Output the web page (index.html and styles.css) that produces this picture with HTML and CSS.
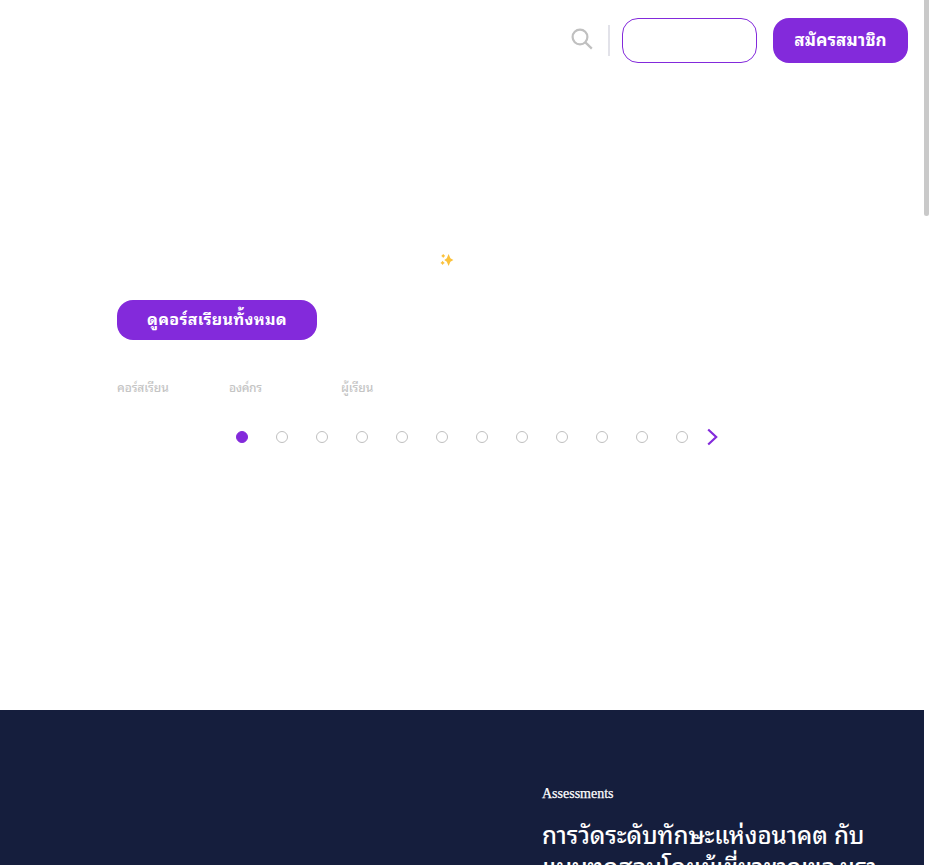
FILE: index.html
```html
<!DOCTYPE html>
<html lang="th">
<head>
<meta charset="utf-8">
<title>Courses</title>
<link rel="stylesheet" href="styles.css">
</head>
<body>
<div class="page">
  <header class="topbar">
    <svg class="search" viewBox="0 0 22 22"><circle cx="9" cy="9" r="7.4"/><path d="M14.4 14.4l6.4 6.2"/></svg>
    <span class="divider"></span>
    <a class="btn btn-outline"></a>
    <a class="btn btn-fill"><span class="signup">สมัครสมาชิก</span></a>
  </header>
  <main class="hero">
    <svg class="sparkles" viewBox="0 0 14 14"><path d="M8.6 1L10.4 5.2 13.4 7 10.4 8.8 8.6 13 6.8 8.8 4.3 7 6.8 5.2ZM3.2 1l.9 1.1 1.1.8-1.1.8-.9 1.2-.9-1.2-1.1-.8 1.1-.8ZM2.6 7.8l.9 1.3 1.3.8-1.3.8-.9 1.3-.9-1.3-1.3-.8 1.3-.8Z"/></svg>
    <a class="btn cta"><span class="cta-label">ดูคอร์สเรียนทั้งหมด</span></a>
    <div class="stats"><span class="stat-a">คอร์สเรียน</span><span class="stat-b">องค์กร</span><span class="stat-c">ผู้เรียน</span></div>
  </main>
  <nav class="pager">
    <i class="dot active"></i><i class="dot"></i><i class="dot"></i><i class="dot"></i><i class="dot"></i><i class="dot"></i><i class="dot"></i><i class="dot"></i><i class="dot"></i><i class="dot"></i><i class="dot"></i><i class="dot"></i>
    <svg class="next" viewBox="0 0 12 18"><path d="M1.2 1.5L9.2 9l-8 7.5"/></svg>
  </nav>
  <section class="assess">
    <p class="eyebrow">Assessments</p>
    <h2 class="title"><span class="line-a">การวัดระดับทักษะแห่งอนาคต กับ</span><br><span class="line-b">แบบทดสอบโดยผู้เชี่ยวชาญของเรา</span></h2>
  </section>
</div>
<div class="scrollbar"><div class="thumb"></div></div>
</body>
</html>
```
FILE: styles.css
```css
* { box-sizing: border-box; }
body { margin: 0; height: 865px; overflow: hidden; display: flex; background: #fff; font-family: "Noto Sans Thai Looped", Loma, Garuda, Waree, Umpush, "Noto Sans Thai", "Noto Sans", sans-serif; }
.page { width: 924px; height: 865px; overflow: hidden; display: flex; flex-direction: column; flex: none; }
.topbar { height: 81px; flex: none; display: flex; justify-content: flex-end; align-items: center; padding-right: 16px; }
.search { width: 22px; height: 22px; margin: 0 15px 3px 0; fill: none; stroke: #c0c0c0; stroke-width: 2.2; }
.divider { width: 2px; height: 31px; background: #e2e2e9; margin-right: 12px; }
.btn { display: flex; align-items: center; justify-content: center; border-radius: 16px; color: #fff; font-weight: 700; white-space: nowrap; }
.btn-outline { width: 135px; height: 45px; border: 1px solid #832adb; margin-right: 16px; }
.btn-fill { width: 135px; height: 45px; padding-bottom: 5px; background: #832adb; font-size: 17px; letter-spacing: .1px; }
.hero { height: 349px; flex: none; padding: 172px 0 0 117px; }
.sparkles { display: block; width: 14px; height: 14px; margin-left: 323px; fill: #fbc23c; }
.cta { width: 200px; height: 40px; margin-top: 33px; padding-bottom: 4px; background: #832adb; font-size: 16px; letter-spacing: .3px; }
.stats { display: grid; grid-template-columns: 112px 112px 112px; margin-top: 37px; font-size: 12px; line-height: 20px; color: #c4c4c4; font-weight: 500; letter-spacing: -.1px; }
.stat-b { letter-spacing: -.4px; }
.pager { display: flex; align-items: center; height: 14px; flex: none; padding-left: 236px; }
.dot { width: 12px; height: 12px; border: 1px solid #c0c0c0; border-radius: 50%; margin-right: 28px; flex: none; }
.dot.active { background: #832adb; border-color: #832adb; }
.next { width: 12px; height: 18px; margin-left: -9px; fill: none; stroke: #832adb; stroke-width: 2.2; flex: none; }
.assess { margin-top: 266px; height: 155px; flex: none; background: #151e3d; color: #fff; padding: 74px 0 0 542px; overflow: hidden; }
.eyebrow { margin: 0; font: 14px/20px "Liberation Serif", serif; -webkit-text-stroke: .25px #fff; }
.title { margin: 13px 0 0; font-size: 24px; line-height: 32px; font-weight: 500; white-space: nowrap; }
.line-a { letter-spacing: -.09px; }
.line-b { letter-spacing: -.25px; }
.scrollbar { width: 5px; height: 865px; flex: none; }
.thumb { height: 216px; background: #c9c9c9; border-radius: 0 0 3px 3px; }
```
